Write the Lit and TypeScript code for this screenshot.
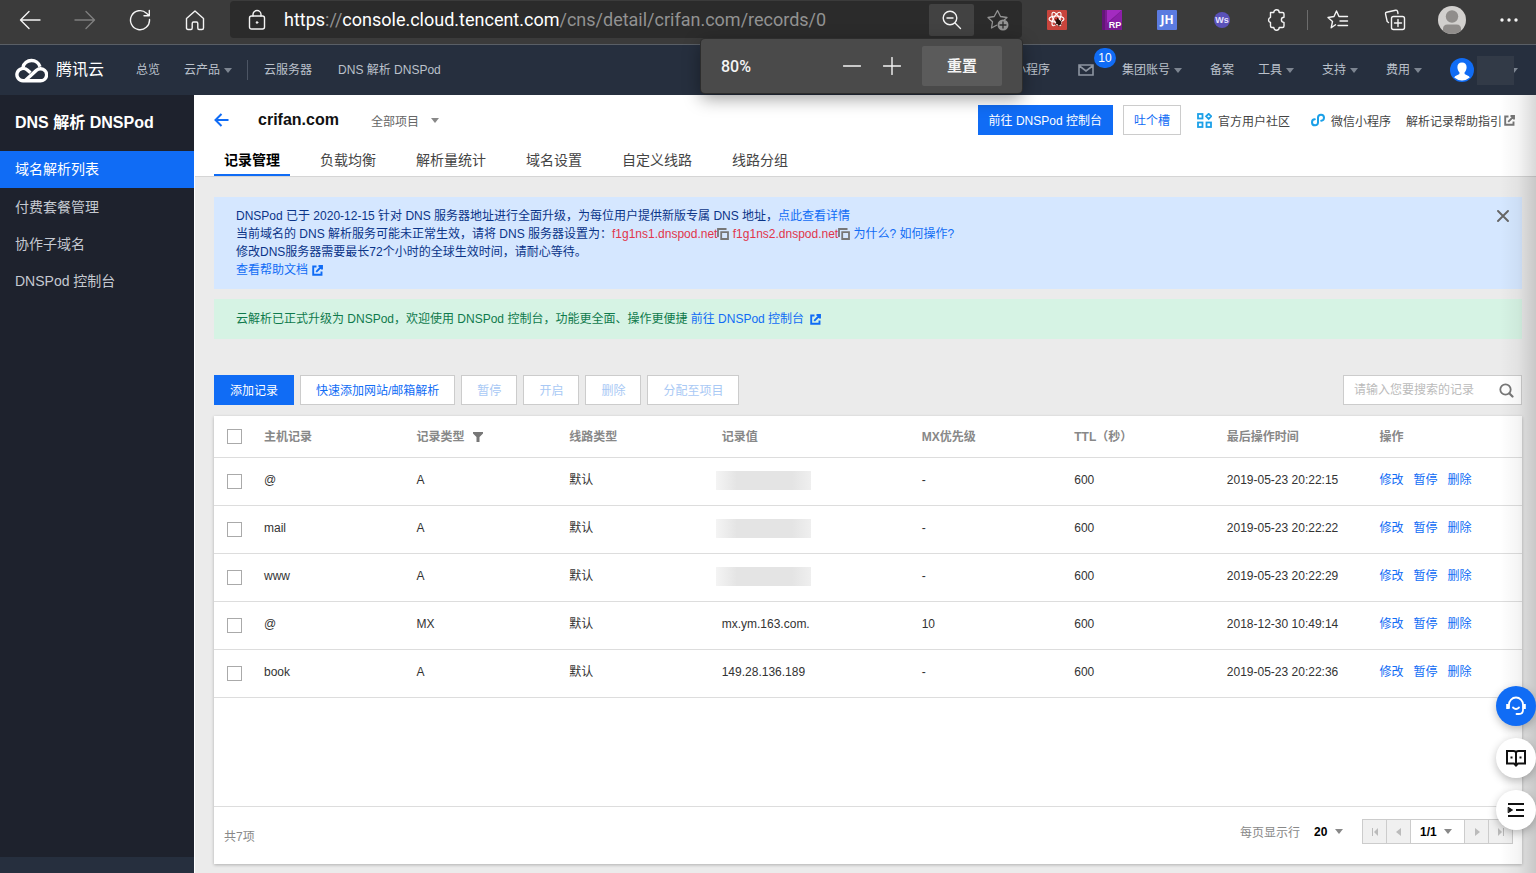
import { LitElement, html, css, svg, nothing } from "lit";
import { customElement, property } from "lit/decorators.js";

const FONT = css`"Liberation Sans", "Noto Sans CJK SC", sans-serif`;

const line = (w: number, h: number, body: unknown, cls = "") => html`
  <svg class="icon ${cls}" width=${w} height=${h} viewBox="0 0 ${w} ${h}" aria-hidden="true"
    fill="none" stroke="currentColor" stroke-linecap="round" stroke-linejoin="round">${body}</svg>`;

const caret = html`<svg class="caret" width="8" height="5" viewBox="0 0 8 5" aria-hidden="true"><path d="M0 0h8L4 5z" fill="currentColor"/></svg>`;

const external = line(11, 11, svg`<path d="M4.500 1.500H1.200V9.800H9.500V6.500M6.500 1H10V4.500M9.500 1.500L4.200 6.800" stroke-width="1.900" stroke-linecap="butt" stroke-linejoin="miter"/>`, "inline");
const copy = line(12, 12, svg`<path d="M1 9V1h8.500M4.200 4.200h6.800v6.800H4.200z" stroke-width="1.800" stroke-linecap="butt" stroke-linejoin="miter"/>`, "inline");

/* ---------- browser chrome ---------- */
@customElement("browser-bar")
export class BrowserBar extends LitElement {
  static styles = css`
    :host { display: block; font-family: Roboto, "Noto Sans CJK SC", sans-serif; color: #f4f4f4; }
    * { box-sizing: border-box; }
    button { font: inherit; color: inherit; border: 0; background: none; padding: 0; }
    .bar { display: flex; align-items: center; height: 45px; padding: 0 7px 5px 10px; background: #3b3b3b; border-bottom: 1px solid #5a5f66; }
    .group { display: flex; align-items: center; gap: 15px; }
    .wide { gap: 17px; }
    .tool { width: 40px; height: 36px; display: grid; place-items: center; }
    .dim { color: #7f7f7f; }
    .address { position: relative; flex: 1; display: flex; align-items: center; height: 37px; margin: 0 15px; padding-left: 18px; background: #2b2b2b; border-radius: 4px; }
    .url { flex: 1; margin-left: 18px; font-size: 18px; line-height: 24px; color: #929292; white-space: nowrap; }
    .host { color: #fff; }
    .mag { width: 45px; height: 32px; display: grid; place-items: center; background: #424242; border-radius: 2px; }
    .star { width: 48px; height: 32px; display: grid; place-items: center; color: #929292; }
    .sep { width: 1px; height: 20px; margin: 0 10px; background: #6c6c6c; }
    .zoom { position: absolute; z-index: 5; top: 38px; right: 0; width: 321px; height: 54px; display: flex; align-items: center; padding: 0 20px; background: #4a4a4a; border-radius: 4px; box-shadow: 0 0 0 1px #2d2d2d, 0 5px 18px rgba(0,0,0,.4); font-size: 16px; font-weight: 500; }
    .pct { flex: 1; }
    .step { width: 40px; height: 40px; display: grid; place-items: center; }
    .reset { width: 80px; height: 40px; margin-left: 10px; background: #5b5b5b; border-radius: 2px; font-family: "Noto Sans CJK SC", sans-serif; font-size: 15px; line-height: 22px; padding-bottom: 2px; font-weight: 700; }
    .badge { width: 20px; height: 20px; }
  `;

  render() {
    return html`
      <header class="bar">
        <div class="group">
          <button class="tool" aria-label="back">${line(22, 20, svg`<path d="M21 10H2M10 1.500L1.500 10L10 18.500" stroke-width="1.400"/>`)}</button>
          <button class="tool dim" aria-label="forward">${line(22, 20, svg`<path d="M1 10H20M12 1.500L20.500 10L12 18.500" stroke-width="1.400"/>`)}</button>
          <button class="tool" aria-label="reload">${line(22, 22, svg`<path d="M20.500 10.500A9.500 9.500 0 1 1 17.500 4.200L20 6.500M20.300 1.500V6.800H15" stroke-width="1.400"/>`)}</button>
          <button class="tool" aria-label="home">${line(20, 22, svg`<path d="M1.500 9.500L10 2L18.500 9.500V19Q18.500 20.500 17 20.500H14Q12.800 20.500 12.800 19V14.500Q12.800 13 11.500 13H8.500Q7.200 13 7.200 14.500V19Q7.200 20.500 6 20.500H3Q1.500 20.500 1.500 19Z" stroke-width="1.400"/>`)}</button>
        </div>
        <div class="address">
          ${line(18, 22, svg`<rect x="1.500" y="7" width="15" height="13" rx="2" stroke-width="1.400"/><path d="M5 7V5.500a4 4 0 0 1 8 0V7" stroke-width="1.400"/><circle cx="9" cy="13.500" r="1" fill="currentColor" stroke-width=".5"/>`)}
          <div class="url" role="textbox" aria-label="address"><span class="host">https</span>://<span class="host">console.cloud.tencent.com</span>/cns/detail/crifan.com/records/0</div>
          <button class="mag" aria-label="zoom">${line(20, 20, svg`<circle cx="8" cy="8" r="6.800" stroke-width="1.400"/><path d="M5 8h6M13 13l5.500 5.500" stroke-width="1.400"/>`)}</button>
          <button class="star" aria-label="favourite">${line(22, 22, svg`<path d="M9.500 16.200L4.500 19L5.500 12.800L1 8.500L7.200 7.500L10.500 1.500L13.500 7.500L20 8.500L17.500 10.800" stroke-width="1.300"/><circle cx="16" cy="16" r="5.500" fill="currentColor" stroke="none"/><path d="M16 13v6M13 16h6" stroke="#2b2b2b" stroke-width="1.300"/>`)}</button>
          <div class="zoom" role="dialog" aria-label="zoom">
            <span class="pct">80%</span>
            <button class="step" aria-label="zoom out">${line(18, 18, svg`<path d="M.5 9h17" stroke-width="1.400"/>`)}</button>
            <button class="step" aria-label="zoom in">${line(18, 18, svg`<path d="M.5 9h17M9 .5v17" stroke-width="1.400"/>`)}</button>
            <button class="reset">重置</button>
          </div>
        </div>
        <div class="group">
          <button class="tool" aria-label="extension">
            <svg class="badge" viewBox="0 0 20 20"><rect width="20" height="20" rx="1" fill="#c8443c"/><g fill="none" stroke="#fff" stroke-width="1.100"><ellipse cx="9.500" cy="9" rx="7.500" ry="3"/><ellipse cx="9.500" cy="9" rx="7.500" ry="3" transform="rotate(60 9.500 9)"/><ellipse cx="9.500" cy="9" rx="7.500" ry="3" transform="rotate(120 9.500 9)"/></g><ellipse cx="11.500" cy="12" rx="2.200" ry="3.200" transform="rotate(-40 11.500 12)" fill="#26130f"/><path d="M8 9.500l6.500 5M8 14.500l7-4M10.500 8l1.500 8.500" stroke="#26130f"/></svg>
          </button>
          <button class="tool" aria-label="extension">
            <svg class="badge" viewBox="0 0 20 20"><rect width="20" height="20" fill="#7a1a92"/><path d="M5 0h15L5 13z" fill="#a32bc0"/><path d="M20 0v12H8z" fill="#8c1fa8"/><path d="M0 0h3v20H0z" fill="#641578"/><text x="13" y="18" text-anchor="middle" font-family="Liberation Sans" font-size="9" font-weight="700" fill="#fff">RP</text></svg>
          </button>
          <button class="tool" aria-label="extension">
            <svg class="badge" viewBox="0 0 20 20"><rect width="20" height="20" rx="1" fill="#5b7be0"/><text x="10" y="14" text-anchor="middle" font-family="Open Sans" font-size="12" font-weight="700" fill="#fff">JH</text></svg>
          </button>
          <button class="tool" aria-label="extension">
            <svg class="badge" viewBox="0 0 20 20"><circle cx="10" cy="10" r="8" fill="#5a51b8"/><text x="10" y="13" text-anchor="middle" font-family="Liberation Sans" font-size="9" font-weight="700" fill="#e6e4ff">Ws</text></svg>
          </button>
          <button class="tool" aria-label="extensions">${line(20, 22, svg`<path d="M3.500 3.500H6.800a2.700 2.700 0 0 1 5.400 0H15.500Q17 3.500 17 5V8.200a2 2 0 0 0 0 5.200V17Q17 18.500 15.500 18.500H12.200a2.700 2.700 0 0 1-5.400 0H5Q3.500 18.500 3.500 17V13.500a2.700 2.700 0 0 1 0-5.200Z" stroke-width="1.400"/>`)}</button>
        </div>
        <span class="sep"></span>
        <div class="group wide">
          <button class="tool" aria-label="favourites">${line(22, 22, svg`<path d="M8.500 15.800L4.200 18.800L5.500 12.500L1 8.500L7 7.500L9.500 2L12 7.500H20.500M13 12h7.500M11 16.500h9.500" stroke-width="1.400"/>`)}</button>
          <button class="tool" aria-label="collections">${line(22, 22, svg`<rect x="7.500" y="7.500" width="13" height="13" rx="2" stroke-width="1.400"/><path d="M14 10.500v7M10.500 14h7M4.500 13.500L3.200 12.500L1.500 4.800Q1.300 3.500 2.500 3.200L11.500 1.200Q13 1 13.500 2.200L14 4.500" stroke-width="1.400"/>`)}</button>
          <button class="tool" aria-label="profile">
            <svg width="28" height="28" viewBox="0 0 28 28"><defs><clipPath id="head"><circle cx="14" cy="14" r="14"/></clipPath></defs><circle cx="14" cy="14" r="14" fill="#d2d0ce"/><g clip-path="url(#head)" fill="#908d8b"><circle cx="14" cy="10.500" r="6.200"/><path d="M5 28v-5q0-4.500 4.500-4.500h9q4.500 0 4.500 4.500v5z"/></g></svg>
          </button>
          <button class="tool" aria-label="more"><svg width="18" height="4" viewBox="0 0 18 4" fill="currentColor"><circle cx="2" cy="2" r="1.700"/><circle cx="9" cy="2" r="1.700"/><circle cx="16" cy="2" r="1.700"/></svg></button>
        </div>
      </header>`;
  }
}

/* ---------- cloud console top navigation ---------- */
@customElement("console-nav")
export class ConsoleNav extends LitElement {
  static styles = css`
    :host { display: block; font-family: ${FONT}; }
    * { box-sizing: border-box; }
    .nav { display: flex; align-items: center; height: 50px; padding: 0 18px 0 15px; background: #262f3e; color: #bbc1cb; font-size: 12px; line-height: 18px; white-space: nowrap; }
    a { color: inherit; text-decoration: none; }
    .logo { display: flex; align-items: center; gap: 8px; margin-right: 20px; color: #fff; font-size: 16px; line-height: 24px; }
    .item { display: flex; align-items: center; gap: 4px; padding: 0 14px; }
    .plain { padding-right: 10px; }
    .left { padding: 0 12px; }
    .pin { padding: 0 13px; }
    .caret { color: #7d8591; }
    .sep { width: 1px; height: 20px; margin: 0 3px; background: #4c5564; }
    .spacer { flex: 1; }
    .mail { position: relative; color: #8d95a1; }
    .count { position: absolute; left: 30px; top: -16px; min-width: 22px; height: 20px; border-radius: 10px; background: #106cf5; color: #fff; text-align: center; line-height: 20px; }
    .user { display: flex; align-items: center; margin-left: 14px; }
    .name { width: 37px; height: 29px; margin-left: 3px; background: #323a47; }
    .half { color: #7d8591; }
  `;

  private menu(label: string) {
    return html`<a class="item" href="#">${label}${caret}</a>`;
  }

  render() {
    return html`
      <nav class="nav">
        <a class="logo" href="#">
          <svg width="33" height="26" viewBox="0 0 33 26" fill="none" stroke="#fff" stroke-width="3.400" stroke-linejoin="round" aria-hidden="true"><path d="M8 10.200A8.800 8.800 0 0 1 25 9.800M10 23.800L21.500 13.200Q24.500 10.700 28 12.300A6 6 0 0 1 25.500 23.800H8A6.200 6.200 0 1 1 12.300 13L15.500 15.800"/></svg>
          腾讯云</a>
        <a class="item left" href="#">总览</a>
        <a class="item left" href="#">云产品${caret}</a>
        <span class="sep"></span>
        <a class="item pin" href="#">云服务器</a>
        <a class="item pin" href="#">DNS 解析 DNSPod</a>
        <span class="spacer"></span>
        <a class="item" href="#">小程序</a>
        <a class="item mail" href="#" aria-label="消息">
          ${line(16, 12, svg`<path d="M1 1h14v10H1zM1.500 2L8 7L14.500 2" stroke-width="1.600" stroke-linejoin="miter"/>`)}
          <span class="count">10</span>
        </a>
        ${this.menu("集团账号")}
        <a class="item plain" href="#">备案</a>
        ${this.menu("工具")}${this.menu("支持")}${this.menu("费用")}
        <div class="user">
          <svg width="24" height="24" viewBox="0 0 24 24" aria-hidden="true"><circle cx="12" cy="12" r="12" fill="#106cf5"/><path d="M12 4.500c3 0 4.600 2 4.600 4.700 0 2.200-1 4-2 5.100v1.700c1.500 1.200 4.500 1.500 5.200 3.500A12 12 0 0 1 4.200 19.500c.7-2 3.700-2.300 5.200-3.500v-1.700c-1-1.100-2-2.900-2-5.100 0-2.700 1.600-4.700 4.600-4.700z" fill="#fff"/></svg>
          <span class="name"></span>
          <svg class="half" width="4" height="5" viewBox="4 0 4 5" aria-hidden="true"><path d="M0 0h8L4 5z" fill="currentColor"/></svg>
        </div>
      </nav>`;
  }
}

/* ---------- sidebar ---------- */
@customElement("side-menu")
export class SideMenu extends LitElement {
  static styles = css`
    :host { display: flex; flex-direction: column; width: 194px; background: #1e222d; font-family: ${FONT}; color: #c5c9d1; }
    .title { margin: 0; padding: 0 15px; font-size: 16px; line-height: 56px; color: #fff; }
    .menu { flex: 1; margin: 0; padding: 0; list-style: none; font-size: 14px; }
    .link { display: block; padding: 0 15px; line-height: 37px; color: inherit; text-decoration: none; }
    .active { margin-bottom: 1px; background: #106cf5; color: #fff; }
    .foot { height: 16px; background: #262f3e; }
  `;
  render() {
    const items = ["域名解析列表", "付费套餐管理", "协作子域名", "DNSPod 控制台"];
    return html`
      <h2 class="title">DNS 解析 DNSPod</h2>
      <ul class="menu">
        ${items.map((t, i) => html`<li><a class="link ${i === 0 ? "active" : ""}" href="#">${t}</a></li>`)}
      </ul>
      <div class="foot"></div>`;
  }
}

/* ---------- title bar with tabs ---------- */
@customElement("domain-header")
export class DomainHeader extends LitElement {
  static styles = css`
    :host { display: block; font-family: ${FONT}; background: #fff; border-bottom: 1px solid #d5d5d5; color: #444; font-size: 12px; }
    * { box-sizing: border-box; }
    a { color: inherit; text-decoration: none; }
    .row { display: flex; align-items: center; height: 50px; padding: 0 21px 0 19px; white-space: nowrap; }
    .back { display: flex; color: #106cf5; }
    .name { margin: 0 32px 0 29px; font-size: 16px; line-height: 24px; color: #111; }
    .project { display: flex; align-items: center; gap: 12px; color: #666; border: 0; background: none; padding: 0; font: inherit; }
    .caret { color: #888; }
    .spacer { flex: 1; }
    .btn { height: 30px; padding: 0 10px 2px; border: 1px solid #106cf5; background: #106cf5; color: #fff; font: inherit; }
    .ghost { margin: 0 16px 0 10px; border-color: #ccc; background: #fff; color: #106cf5; }
    .help { display: flex; align-items: center; gap: 6px; }
    .mini { margin: 0 15px 0 21px; }
    .guide { gap: 2px; }
    .guide .icon { color: #777; }
    .tabs { display: flex; gap: 20px; padding: 0 19px; }
    .tab { padding: 2px 10px 0; border: 0; border-bottom: 2px solid transparent; background: none; font: inherit; font-size: 14px; line-height: 27px; color: #444; white-space: nowrap; }
    .on { border-color: #106cf5; color: #000; font-weight: 700; }
  `;
  render() {
    const tabs = ["记录管理", "负载均衡", "解析量统计", "域名设置", "自定义线路", "线路分组"];
    return html`
      <div class="row">
        <a class="back" href="#" aria-label="返回">${line(15, 14, svg`<path d="M14.500 7H2M7.500 1L1.500 7L7.500 13" stroke-width="2" stroke-linecap="butt" stroke-linejoin="miter"/>`)}</a>
        <h1 class="name">crifan.com</h1>
        <button class="project">全部项目${caret}</button>
        <span class="spacer"></span>
        <button class="btn">前往 DNSPod 控制台</button>
        <button class="btn ghost">吐个槽</button>
        <a class="help" href="#"><svg width="15" height="15" viewBox="0 0 15 15" fill="none" stroke="#1ba0e8" stroke-width="1.800" aria-hidden="true"><rect x="1" y="1" width="4.500" height="4.500"/><rect x="1" y="9.500" width="4.500" height="4.500"/><rect x="9.500" y="9.500" width="4.500" height="4.500"/><path d="M11.700 .8L14.300 3.300L11.700 5.900L9.100 3.300z"/></svg>官方用户社区</a>
        <a class="help mini" href="#"><svg width="14" height="14" viewBox="0 0 14 14" fill="none" stroke="#1ba0e8" stroke-width="2" stroke-linecap="round" aria-hidden="true"><path d="M3.800 6.300A3 3 0 1 0 7 9.500V4.500A3 3 0 1 1 10.200 7.700"/></svg>微信小程序</a>
        <a class="help guide" href="#">解析记录帮助指引${external}</a>
      </div>
      <div class="tabs" role="tablist">
        ${tabs.map((t, i) => html`<button class="tab ${i === 0 ? "on" : ""}" role="tab" aria-selected=${i === 0}>${t}</button>`)}
      </div>`;
  }
}

/* ---------- notices ---------- */
@customElement("notice-list")
export class NoticeList extends LitElement {
  static styles = css`
    :host { display: flex; flex-direction: column; gap: 10px; font-family: ${FONT}; font-size: 12px; line-height: 18px; }
    .note { display: flex; align-items: flex-start; padding: 10px 13px 10px 22px; background: #d5e7ff; color: #0a3488; }
    .ok { padding-top: 11px; padding-bottom: 11px; background: #d6f3e4; color: #0f7a4c; }
    .text { flex: 1; margin: 0; }
    a { color: #106cf5; text-decoration: none; }
    .ns { color: #e1354b; }
    .inline { vertical-align: -2px; margin: 0 1px; }
    .copy { border: 0; padding: 0; background: none; color: #777; }
    .copy .inline { margin: 0; }
    .ok .inline { margin-left: 3px; }
    .close { display: flex; margin-top: 3px; padding: 0; border: 0; background: none; color: #666; }
  `;
  render() {
    return html`
      <div class="note">
        <p class="text">
          DNSPod 已于 2020-12-15 针对 DNS 服务器地址进行全面升级，为每位用户提供新版专属 DNS 地址，<a href="#">点此查看详情</a><br>
          当前域名的 DNS 解析服务可能未正常生效，请将 DNS 服务器设置为：<span class="ns">f1g1ns1.dnspod.net</span><button class="copy" aria-label="复制">${copy}</button> <span class="ns">f1g1ns2.dnspod.net</span><button class="copy" aria-label="复制">${copy}</button> <a href="#">为什么?</a> <a href="#">如何操作?</a><br>
          修改DNS服务器需要最长72个小时的全球生效时间，请耐心等待。<br>
          <a href="#">查看帮助文档${external}</a>
        </p>
        <button class="close" aria-label="关闭">${line(12, 12, svg`<path d="M1 1l10 10M11 1L1 11" stroke-width="1.900"/>`)}</button>
      </div>
      <div class="note ok">
        <p class="text">云解析已正式升级为 DNSPod，欢迎使用 DNSPod 控制台，功能更全面、操作更便捷 <a href="#">前往 DNSPod 控制台 ${external}</a></p>
      </div>`;
  }
}

interface RecordRow { host: string; type: string; value?: string; mx: string; time: string; }

/* ---------- record table ---------- */
@customElement("record-table")
export class RecordTable extends LitElement {
  @property({ attribute: false }) rows: RecordRow[] = [];

  static styles = css`
    :host { display: flex; flex-direction: column; flex: 1; background: #fff; box-shadow: 0 1px 3px rgba(0,0,0,.25); font-family: ${FONT}; font-size: 12px; color: #333; }
    * { box-sizing: border-box; }
    .grid { width: 100%; table-layout: fixed; border-collapse: collapse; }
    .c-check { width: 40px; }
    .c-value { width: 200px; }
    th, td { padding: 0 10px 2px; text-align: left; border-bottom: 1px solid #ddd; white-space: nowrap; }
    th { height: 41px; color: #888; }
    td { height: 48px; line-height: 18px; }
    .pick { padding: 0; text-align: center; }
    input { appearance: none; display: block; width: 15px; height: 15px; margin: 0 auto; border: 1px solid #aaa; background: #fff; }
    .filter { margin-left: 8px; vertical-align: -1px; color: #777; }
    .masked { display: block; width: 95px; height: 19px; margin-left: -6px; background: linear-gradient(90deg, #f4f4f4, #e4e4e4 22%, #e4e4e4 80%, #efefef); }
    .ops { display: flex; gap: 10px; }
    a { color: #106cf5; text-decoration: none; }
    .foot { display: flex; align-items: center; height: 58px; margin-top: auto; padding: 0 10px; border-top: 1px solid #ddd; color: #888; }
    .total { flex: 1; }
    .pager { display: flex; align-items: center; margin-bottom: 8px; }
    .drop { display: flex; align-items: center; gap: 7px; color: #888; }
    select { appearance: none; border: 0; padding: 0; margin: 0; background: none; color: #000; font: inherit; font-weight: 700; }
    .size { margin: 0 19px 0 14px; }
    .pages { display: flex; }
    .pg { width: 25px; height: 25px; margin-right: -1px; padding: 0; display: grid; place-items: center; border: 1px solid #ccc; background: #f0f0f0; color: #bbb; }
    .cur { height: 25px; width: 55px; padding-left: 9px; border: 1px solid #ccc; margin-right: -1px; background: #fff; }
  `;

  render() {
    const heads = ["主机记录", "记录类型", "线路类型", "记录值", "MX优先级", "TTL（秒）", "最后操作时间", "操作"];
    const tri = (d: string) => html`<svg width="8" height="8" viewBox="0 0 8 8" aria-hidden="true"><path d=${d} fill="currentColor"/></svg>`;
    return html`
      <table class="grid">
        <colgroup><col class="c-check"><col><col><col><col class="c-value"><col><col><col><col></colgroup>
        <thead><tr>
          <th class="pick"><input type="checkbox" aria-label="全选"></th>
          ${heads.map((h, i) => html`<th>${h}${i === 1 ? html`<svg class="filter" width="10" height="10" viewBox="0 0 10 10" aria-hidden="true"><path d="M0 0h10v1.500L6.500 5v5h-3V5L0 1.500z" fill="currentColor"/></svg>` : nothing}</th>`)}
        </tr></thead>
        <tbody>
          ${this.rows.map((r) => html`<tr>
            <td class="pick"><input type="checkbox" aria-label=${r.host}></td>
            <td>${r.host}</td><td>${r.type}</td><td>默认</td>
            <td>${r.value ?? html`<span class="masked"></span>`}</td>
            <td>${r.mx}</td><td>600</td><td>${r.time}</td>
            <td><div class="ops"><a href="#">修改</a><a href="#">暂停</a><a href="#">删除</a></div></td>
          </tr>`)}
        </tbody>
      </table>
      <div class="foot">
        <span class="total">共7项</span>
        <div class="pager">
          <label for="size">每页显示行</label>
          <span class="drop size"><select id="size"><option>20</option></select>${caret}</span>
          <div class="pages">
            <button class="pg" aria-label="首页">${tri("M1 0h1v8H1zM7 0v8L3 4z")}</button>
            <button class="pg" aria-label="上一页">${tri("M6 0v8L1 4z")}</button>
            <span class="drop cur"><select aria-label="页码"><option>1/1</option></select>${caret}</span>
            <button class="pg" aria-label="下一页">${tri("M2 0v8l5-4z")}</button>
            <button class="pg" aria-label="末页">${tri("M6 0h1v8H6zM1 0v8l4-4z")}</button>
          </div>
        </div>
      </div>`;
  }
}

/* ---------- page ---------- */
@customElement("app-root")
export class AppRoot extends LitElement {
  static styles = css`
    :host { display: flex; flex-direction: column; min-height: 100vh; background: #ebebeb; font-family: ${FONT}; font-size: 12px; }
    * { box-sizing: border-box; }
    .shell { position: relative; flex: 1; display: flex; }
    .main { flex: 1; min-width: 0; display: flex; flex-direction: column; border-left: 1px solid #fff; }
    .body { flex: 1; display: flex; flex-direction: column; padding: 20px 14px 9px 19px; }
    .actions { display: flex; align-items: center; gap: 6px; margin: 36px 0 11px; }
    .btn { height: 30px; padding: 0 15px 2px; border: 1px solid #ccc; background: #fff; color: #106cf5; font: inherit; white-space: nowrap; }
    .primary { border-color: #106cf5; background: #106cf5; color: #fff; }
    .btn:disabled { color: #a9c9f5; }
    .search { display: flex; align-items: center; width: 179px; height: 30px; margin-left: auto; padding: 0 7px 0 10px; border: 1px solid #ccc; background: #fff; }
    .field { flex: 1; min-width: 0; border: 0; padding: 0; outline: 0; background: none; font: inherit; }
    .field::placeholder { color: #bbb; }
    .go { display: flex; border: 0; padding: 0; background: none; color: #777; }
    .shade { position: absolute; top: 0; right: 0; bottom: 0; width: 36px; pointer-events: none; background: linear-gradient(90deg, rgba(0,0,0,0), rgba(0,0,0,.04) 50%, rgba(0,0,0,.15)); }
    .float { position: fixed; right: 0; bottom: 43px; display: flex; flex-direction: column; gap: 12px; }
    .round { width: 40px; height: 40px; padding: 0; border: 0; border-radius: 50%; display: grid; place-items: center; background: #fff; color: #111; box-shadow: 0 3px 8px rgba(0,0,0,.25); }
    .service { background: #106cf5; color: #fff; }
  `;

  private rows: RecordRow[] = [
    { host: "@", type: "A", mx: "-", time: "2019-05-23 20:22:15" },
    { host: "mail", type: "A", mx: "-", time: "2019-05-23 20:22:22" },
    { host: "www", type: "A", mx: "-", time: "2019-05-23 20:22:29" },
    { host: "@", type: "MX", value: "mx.ym.163.com.", mx: "10", time: "2018-12-30 10:49:14" },
    { host: "book", type: "A", value: "149.28.136.189", mx: "-", time: "2019-05-23 20:22:36" },
  ];

  render() {
    return html`
      <browser-bar></browser-bar>
      <console-nav></console-nav>
      <div class="shell">
        <side-menu></side-menu>
        <main class="main">
          <domain-header></domain-header>
          <div class="body">
            <notice-list></notice-list>
            <div class="actions">
              <button class="btn primary">添加记录</button>
              <button class="btn">快速添加网站/邮箱解析</button>
              <button class="btn" disabled>暂停</button>
              <button class="btn" disabled>开启</button>
              <button class="btn" disabled>删除</button>
              <button class="btn" disabled>分配至项目</button>
              <div class="search">
                <input class="field" type="text" aria-label="搜索记录" placeholder="请输入您要搜索的记录">
                <button class="go" aria-label="搜索">${line(15, 15, svg`<circle cx="6.500" cy="6.500" r="5.200" stroke-width="1.800"/><path d="M10.500 10.500L13.500 13.500" stroke-width="2.200"/>`)}</button>
              </div>
            </div>
            <record-table .rows=${this.rows}></record-table>
          </div>
        </main>
        <div class="shade"></div>
      </div>
      <div class="float">
        <button class="round service" aria-label="客服">${line(22, 22, svg`<path d="M4 13V9.500a7 7 0 0 1 14 0V15q0 4-4 4H11.500" stroke-width="1.800"/><path d="M2.500 9v5M19.500 9v5" stroke-width="2.600" stroke-linecap="butt"/><path d="M8 12.500q3 3 6 0" stroke-width="1.800"/>`)}</button>
        <button class="round" aria-label="文档">${line(22, 20, svg`<path d="M2 3H8.500Q11 3 11 5Q11 3 13.500 3H20V15.500H13L11 17.500L9 15.500H2ZM11 5V17" stroke-width="2" stroke-linejoin="miter"/><path d="M5.500 9.500h2M14.500 9.500h2" stroke-width="2" stroke-linecap="butt"/>`)}</button>
        <button class="round" aria-label="目录">${line(18, 16, svg`<path d="M1 2h16M9 8h8M1 14h16" stroke-width="2" stroke-linecap="butt"/><path d="M1.500 5.500L5.500 8L1.500 10.500z" fill="currentColor" stroke-width="1"/>`)}</button>
      </div>`;
  }
}
